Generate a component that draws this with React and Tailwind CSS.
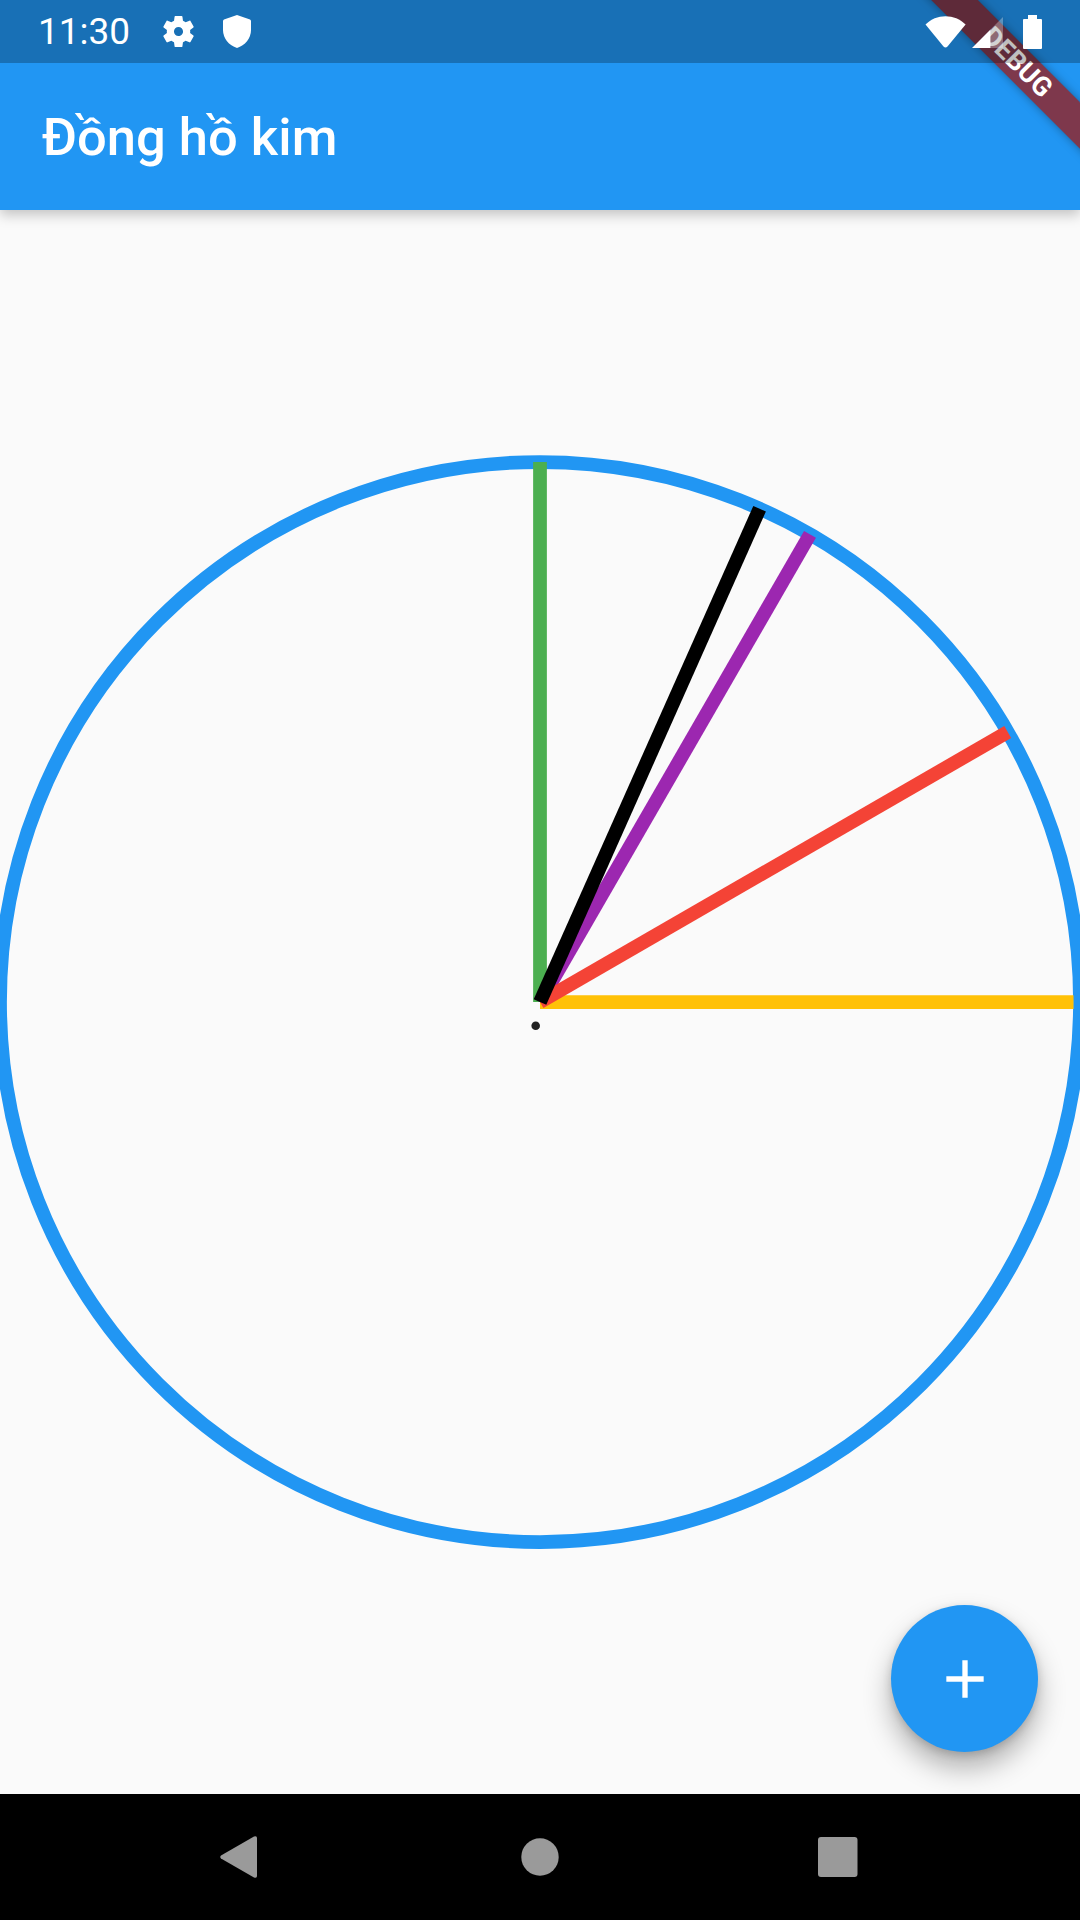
import React from "react";

const RING = "#2196f3";

// clock hands, in drawing order
const hands = [
  { x: 540, y: 12, color: "#4caf50" },
  { x: 1073.5, y: 552, color: "#ffc107" },
  { x: 810, y: 84.4, color: "#9c27b0" },
  { x: 1007.7, y: 282, color: "#f44336" },
  { x: 759.6, y: 58.7, color: "#000000" },
];

// sits above the ribbon, the scrim darkens whatever is under it
const StatusBar = () => (
  <div className="relative z-30 h-[63px] shrink-0 bg-black/25 flex items-center text-white pl-[38px] pr-[38px]">
    <span className="text-[37px] leading-none font-['Roboto',sans-serif]">11:30</span>

    {/* gear */}
    <svg viewBox="0 0 24 24" className="w-[39px] h-[39px] ml-[29px] fill-white">
      <path
        fillRule="evenodd"
        d="M19.14 12.94c.04-.3.06-.61.06-.94 0-.32-.02-.64-.07-.94l2.03-1.58c.18-.14.23-.41.12-.61l-1.92-3.32c-.12-.22-.37-.29-.59-.22l-2.39.96c-.5-.38-1.03-.7-1.62-.94l-.36-2.54c-.04-.24-.24-.41-.48-.41h-3.84c-.24 0-.43.17-.47.41l-.36 2.54c-.59.24-1.13.57-1.62.94l-2.39-.96c-.22-.08-.47 0-.59.22L2.74 8.87c-.12.21-.08.47.12.61l2.03 1.58c-.05.3-.09.63-.09.94s.02.64.07.94l-2.03 1.58c-.18.14-.23.41-.12.61l1.92 3.32c.12.22.37.29.59.22l2.39-.96c.5.38 1.03.7 1.62.94l.36 2.54c.05.24.24.41.48.41h3.84c.24 0 .44-.17.47-.41l.36-2.54c.59-.24 1.13-.56 1.62-.94l2.39.96c.22.08.47 0 .59-.22l1.92-3.32c.12-.22.07-.47-.12-.61l-2.01-1.58zM12 14.8c-1.54 0-2.8-1.26-2.8-2.8s1.26-2.8 2.8-2.8 2.8 1.26 2.8 2.8-1.26 2.8-2.8 2.8z"
      />
    </svg>

    {/* shield */}
    <svg viewBox="0 0 28 33" className="w-[28px] h-[33px] ml-[25px] fill-white">
      <path d="M14 0 L27 4.5 Q28 5 28 6 V15 C28 23.5 22 30.5 14 33 C6 30.5 0 23.5 0 15 V6 Q0 5 1 4.5 Z" />
    </svg>

    <div className="ml-auto flex items-center">
      {/* wifi */}
      <svg viewBox="0 0 41 32" className="w-[41px] h-[32px] fill-white">
        <path d="M0.5 8.5 C11 -2.6 30 -2.6 40.6 8.5 L22.5 30.5 Q20.5 32.6 18.5 30.5 Z" />
      </svg>

      {/* signal */}
      <svg viewBox="0 0 31 31" className="w-[31px] h-[31px] ml-[6px] mt-[1px] fill-white">
        <path d="M31 0 V31 H18.5 V12.5 Z" fillOpacity="0.3" />
        <path d="M0 31 L18.5 12.5 V31 Z" />
      </svg>

      {/* battery */}
      <svg viewBox="0 0 19 34" className="w-[19px] h-[34px] ml-[20px] fill-white">
        <path d="M5 0 H14 V4 H18 Q19 4 19 5 V33 Q19 34 18 34 H1 Q0 34 0 33 V5 Q0 4 1 4 H5 Z" />
      </svg>
    </div>
  </div>
);

const ClockFace = () => (
  <svg viewBox="0 0 1080 1104" className="w-[1080px] h-[1104px] shrink-0">
    <circle cx="540" cy="552" r="540" fill="none" stroke={RING} strokeWidth="13.75" />
    {hands.map((h) => (
      <line key={h.color} x1="540" y1="552" x2={h.x} y2={h.y} stroke={h.color} strokeWidth="13.75" />
    ))}
    <circle cx="535.7" cy="575.7" r="4.3" fill="#212121" />
  </svg>
);

const NavBar = () => (
  <div className="h-[126px] shrink-0 bg-black flex items-center pl-[218px] pb-[1px]">
    <svg viewBox="0 0 40 44" className="w-[40px] h-[44px] fill-[#9a9a9a]">
      <path d="M3 23.5 Q1.5 22 3 20.6 L36 1.6 Q39 0.6 39 3 V41 Q39 43.4 36 42.4 Z" />
    </svg>
    <svg viewBox="0 0 40 40" className="w-[40px] h-[40px] ml-[262px] fill-[#9a9a9a]">
      <circle cx="20" cy="20" r="18.7" />
    </svg>
    <svg viewBox="0 0 40 40" className="w-[40px] h-[40px] ml-[258px] fill-[#9a9a9a]">
      <rect x="0" y="0" width="39.5" height="40" rx="3" />
    </svg>
  </div>
);

export default function App() {
  return (
    <div className="relative w-[1080px] h-[1920px] overflow-hidden flex flex-col bg-[#fafafa] font-['Roboto',sans-serif]">
      {/* Header: no z-index here, the ribbon has to slide between scrim and app bar */}
      <div className="relative shrink-0 bg-[#2196f3] shadow-[0_5px_12px_rgba(0,0,0,0.22)]">
        <StatusBar />
        <div className="h-[147px] flex items-center pl-[42px]">
          <h1 className="text-[52.5px] font-medium text-white leading-none pt-[2px]">Đồng hồ kim</h1>
        </div>
      </div>

      {/* Clock */}
      <div className="flex-1 min-h-0 flex items-center justify-center">
        <ClockFace />
      </div>

      <NavBar />

      {/* FAB */}
      <button className="absolute right-[42px] bottom-[168px] w-[147px] h-[147px] rounded-full bg-[#2196f3] flex items-center justify-center shadow-[0_16px_28px_rgba(0,0,0,0.3),0_3px_8px_rgba(0,0,0,0.15)]">
        <svg viewBox="0 0 24 24" className="w-[64px] h-[64px] fill-white">
          <path d="M19 13h-6v6h-2v-6H5v-2h6V5h2v6h6v2z" />
        </svg>
      </button>

      {/* Debug ribbon */}
      <div className="absolute z-20 left-[867px] top-[46px] w-[300px] h-[33px] rotate-45 bg-[#981e1cc7] flex items-center justify-center shadow-[0_0_10px_rgba(0,0,0,0.35)]">
        <span className="text-[27px] font-bold text-white leading-none">DEBUG</span>
      </div>
    </div>
  );
}
